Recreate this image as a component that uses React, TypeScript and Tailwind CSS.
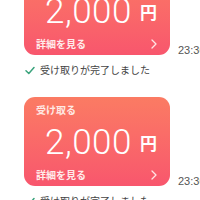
import React from "react";

const jp = { fontFamily: '"Noto Sans CJK JP", "Noto Sans", sans-serif' };

function Card() {
  return (
    <div
      className="relative shrink-0 w-[146px] h-[89px] rounded-[11px] overflow-hidden flex flex-col pt-[6px] pl-[12px] pr-[10px] text-white bg-gradient-to-b from-[#fb7b63] to-[#f8566d]"
      style={jp}
    >
      <div className="text-[10px] leading-[14px] font-bold text-[#ffe9e4]">受け取る</div>
      <div className="mt-[8px] h-[36px] flex items-center pl-[9px]">
        <span
          className="text-[35px] leading-[36px] font-light tracking-[0.5px]"
          style={{ fontFamily: 'Roboto, "Liberation Sans", sans-serif' }}
        >
          2,000
        </span>
        <span className="ml-[8px] text-[17px] leading-[20px] font-bold">円</span>
      </div>
      <div className="mt-[7px] h-[14px] flex items-center justify-between">
        <span className="text-[10px] leading-[14px] font-bold text-[#ffeceb]">詳細を見る</span>
        <svg width="8" height="10" viewBox="0 0 8 10" className="mr-[2px]">
          <path d="M2 1 L6 5 L2 9" fill="none" stroke="#ffe4e4" strokeWidth="1.3" strokeLinecap="round" strokeLinejoin="round" />
        </svg>
      </div>
    </div>
  );
}

function Item() {
  return (
    <div className="flex flex-col">
      <div className="flex items-end">
        <Card />
        <span
          className="shrink-0 ml-[8px] mb-[-1px] text-[11px] leading-[11px] text-[#555] whitespace-nowrap"
          style={{ fontFamily: '"Liberation Sans", sans-serif' }}
        >
          23:30
        </span>
      </div>
      <div className="mt-[8px] h-[14px] flex items-center pl-[1px]">
        <svg width="10" height="9" viewBox="0 0 10 9">
          <path d="M1 4.8 L3.8 7.5 L9 1.5" fill="none" stroke="#3aa37c" strokeWidth="1.5" strokeLinecap="round" strokeLinejoin="round" />
        </svg>
        <span className="ml-[5px] text-[10px] leading-[14px] text-[#444] whitespace-nowrap" style={jp}>
          受け取りが完了しました
        </span>
      </div>
    </div>
  );
}

export default function App() {
  return (
    <div className="w-[200px] h-[200px] overflow-hidden bg-white">
      <div className="-mt-[34px] pl-[24px] flex flex-col gap-[20px]">
        <Item />
        <Item />
      </div>
    </div>
  );
}
